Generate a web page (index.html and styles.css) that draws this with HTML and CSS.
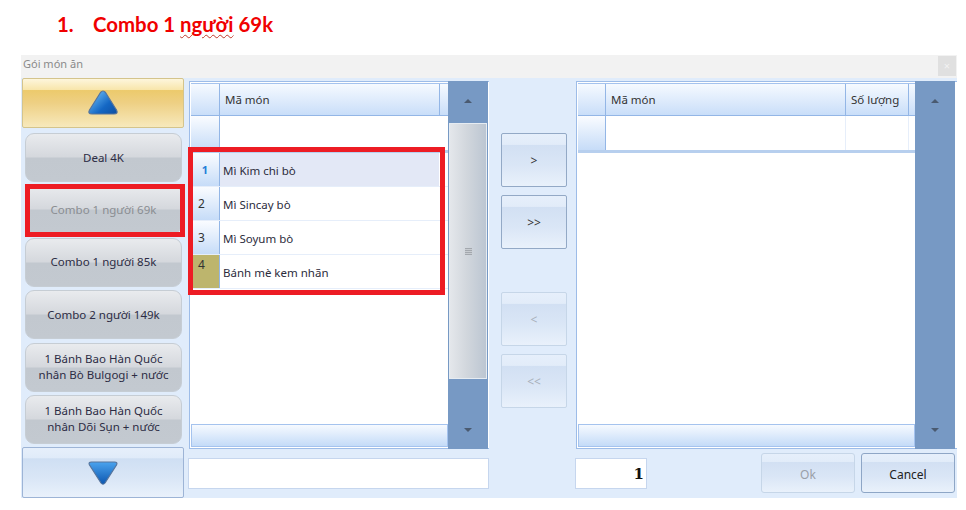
FILE: index.html
```html
<!DOCTYPE html>
<html lang="vi">
<head>
<meta charset="utf-8">
<title>Gói món ăn</title>
<link rel="stylesheet" href="styles.css">
</head>
<body>
<h1 class="heading"><span class="heading-num">1.</span><span>Combo 1 <span class="squiggle">người</span> 69k</span></h1>
<div class="dialog">
  <div class="titlebar"><span>Gói món ăn</span><span class="close">×</span></div>
  <div class="body">
    <div class="sidebar">
      <button class="nav nav-up"><svg width="32" height="28" viewBox="0 0 32 28"><defs><linearGradient id="tu" x1="0.1" y1="0.2" x2="1" y2="1"><stop offset="0" stop-color="#63b4f0"/><stop offset="0.55" stop-color="#1467c4"/><stop offset="1" stop-color="#0f4fa0"/></linearGradient></defs><path d="M13.5 3.5 Q16 0.5 18.5 3.5 L29.5 21 Q31.5 25 27 25 L5 25 Q0.5 25 2.5 21 Z" fill="url(#tu)" stroke="#56749c" stroke-width="1.2" stroke-linejoin="round"/></svg></button>
      <div class="items">
        <button class="item">Deal 4K</button>
        <button class="item item-off">Combo 1 người 69k</button>
        <button class="item">Combo 1 người 85k</button>
        <button class="item">Combo 2 người 149k</button>
        <button class="item">1 Bánh Bao Hàn Quốc<br>nhân Bò Bulgogi + nước</button>
        <button class="item">1 Bánh Bao Hàn Quốc<br>nhân Dõi Sụn + nước</button>
      </div>
      <button class="nav nav-down"><svg width="32" height="26" viewBox="0 0 32 26"><defs><linearGradient id="td" x1="0" y1="0" x2="0" y2="1"><stop offset="0" stop-color="#4aa3ee"/><stop offset="1" stop-color="#0d57b0"/></linearGradient></defs><path d="M18 23 Q16 25.5 14 23 L2.5 5 Q1 2 4.5 2 L27.5 2 Q31 2 29.5 5 Z" fill="url(#td)" stroke="#56749c" stroke-width="1.2" stroke-linejoin="round"/></svg></button>
    </div>

    <div class="panel panel-left">
      <div class="gridbox">
        <div class="grid">
          <div class="row head">
            <div class="ind"></div><div class="cell cell-main">Mã món</div><div class="cell-end"></div>
          </div>
          <div class="row blank"><div class="ind"></div><div class="cell cell-fill"></div></div>
          <div class="row data selected"><div class="ind ind-active">1</div><div class="cell">Mì Kim chi bò</div></div>
          <div class="row data"><div class="ind">2</div><div class="cell">Mì Sincay bò</div></div>
          <div class="row data"><div class="ind">3</div><div class="cell">Mì Soyum bò</div></div>
          <div class="row data"><div class="ind ind-new">4</div><div class="cell">Bánh mè kem nhãn</div></div>
          <div class="grid-fill"></div>
          <div class="hscroll"></div>
        </div>
        <div class="vscroll">
          <div class="vbtn"><span class="arrow-up"></span></div>
          <div class="thumb"><span class="grip"></span></div>
          <div class="vrest"></div>
          <div class="vbtn vbtn-down"><span class="arrow-down"></span></div>
        </div>
      </div>
      <div class="field field-search"></div>
    </div>

    <div class="movers">
      <button class="mv">&gt;</button>
      <button class="mv">&gt;&gt;</button>
      <button class="mv mv-off mv-gap">&lt;</button>
      <button class="mv mv-off">&lt;&lt;</button>
    </div>

    <div class="panel panel-right">
      <div class="gridbox">
        <div class="grid">
          <div class="row head">
            <div class="ind ind-narrow"></div><div class="cell cell-name">Mã món</div><div class="cell cell-qty">Số lượng</div><div class="cell-end"></div>
          </div>
          <div class="row blank"><div class="ind ind-narrow"></div><div class="cell cell-name"></div><div class="cell cell-qty"></div></div>
          <div class="grid-fill"></div>
          <div class="hscroll"></div>
        </div>
        <div class="vscroll">
          <div class="vbtn"><span class="arrow-up"></span></div>
          <div class="vrest"></div>
          <div class="vbtn vbtn-down"><span class="arrow-down"></span></div>
        </div>
      </div>
      <div class="footer">
        <div class="field field-qty">1</div>
        <div class="actions">
          <button class="act act-off">Ok</button>
          <button class="act">Cancel</button>
        </div>
      </div>
    </div>
  </div>
  <div class="mark mark-item"></div>
  <div class="mark mark-rows"></div>
</div>
</body>
</html>
```
FILE: styles.css
```css
* { box-sizing: border-box; }
html, body { margin: 0; padding: 0; background: #fff; }
body { width: 966px; height: 510px; overflow: hidden; font-family: "Noto Sans", "Open Sans", sans-serif; }
button { font: inherit; padding: 0; margin: 0; }

.heading { margin: 0; height: 55px; padding: 11px 0 0 57px; display: flex; font: bold 20.4px/26px Lato, "Open Sans", sans-serif; color: #f00000; }
.heading-num { width: 36px; }
.squiggle { text-decoration: underline wavy #c0392b 1px; text-underline-offset: 2px; }

.dialog { position: relative; margin-left: 21px; width: 936px; height: 443px; background: #e0ecfb; font-size: 11.5px; color: #2c2c3c; }
.titlebar { height: 23px; background: #f2f2f2; display: flex; align-items: flex-start; justify-content: space-between; padding: 1px 0 0 2px; color: #8a8a8a; font-size: 11px; }
.close { width: 18px; height: 20px; background: #e0e0e0; color: #f2f2f2; text-align: center; line-height: 20px; margin-right: 1px; }
.body { display: flex; height: 420px; }

.sidebar { width: 163px; margin-left: 1px; display: flex; flex-direction: column; }
.nav { display: flex; align-items: center; justify-content: center; border-radius: 2px; width: 162px; }
.nav-up { height: 50px; border: 1px solid #d4c48c; background: linear-gradient(#fdf6dc 0, #f8e6ac 22%, #ecca6c 24%, #eed084 50%, #f7e9bc 100%); }
.nav-down { height: 51px; border: 1px solid #9db4d6; background: linear-gradient(#e6effb 0, #e0ebf9 20%, #cfdff3 22%, #d9e6f6 60%, #e9f1fb 100%); }
.items { flex: 1; display: flex; flex-direction: column; gap: 3.4px; padding: 5px 0 0 3px; }
.item { width: 157px; height: 49px; border: 1.5px solid #c6cdd4; border-radius: 9px; background: linear-gradient(#e9ebee 0, #d5d8dd 48%, #c2c8cf 52%, #c3c9d0 100%); color: #2c2c44; font-size: 11.5px; line-height: 16px; }
.item-off { color: #8a8d92; }

.panel { display: flex; flex-direction: column; }
.panel-left { width: 300px; margin-left: 4px; padding-top: 3px; }
.panel-right { width: 381px; padding-top: 3px; }
.gridbox { height: 368px; display: flex; border: 1px solid #9dbce8; border-right: 0; background: #fff; }
.grid { flex: 1; min-width: 0; display: flex; flex-direction: column; }
.row { display: flex; }
.ind { width: 29px; flex: none; border-right: 1px solid #93b6e6; background: linear-gradient(#fafcff, #c6dcf8); display: flex; align-items: center; padding-left: 7px; font-size: 12px; color: #333; }
.ind-narrow { width: 28px; }
.head { height: 33px; margin: 1px 0 0 1px; border-top: 1px solid #a5c3ee; border-bottom: 1px solid #93b6e6; background: linear-gradient(#f6faff, #c9def9); }
.head .ind { background: none; }
.cell { display: flex; align-items: center; padding-left: 3px; }
.head .cell { padding-left: 5px; color: #333; }
.cell-main { width: 220px; border-right: 1px solid #93b6e6; }
.cell-fill { flex: 1; }
.cell-name { width: 240px; flex: none; border-right: 1px solid #93b6e6; }
.cell-qty { width: 63px; flex: none; border-right: 1px solid #93b6e6; }
.blank .cell-name, .blank .cell-qty { border-right-color: #e6eefa; }
.cell-end { flex: 1; }
.blank { height: 37px; margin-left: 1px; border-bottom: 3px solid #b7cfee; }
.data { height: 34px; margin-left: 1px; border-bottom: 1px solid #e6eefa; }
.data .cell { flex: 1; margin-right: 9px; padding-top: 2px; }
.selected .cell { background: #e3e8f6; margin-right: 9px; }
.ind-active { color: #1f7fd8; font-weight: bold; font-size: 11px; justify-content: center; padding: 0; }
.ind-new { background: #bdb56d; align-items: flex-start; padding-top: 1px; color: #333; }
.grid-fill { flex: 1; }
.hscroll { height: 23px; margin: 0 0 1px 1px; border: 1px solid #a5c3ee; background: linear-gradient(#f6faff, #c4dbf8); }

.vscroll { width: 40px; flex: none; background: #7799c4; display: flex; flex-direction: column; margin-right: 1px; }
.panel-right .vscroll { margin-right: 2px; }
.gridbox .vscroll { margin-top: -1px; margin-bottom: -1px; }
.vbtn { height: 42px; display: flex; align-items: center; justify-content: center; flex: none; }
.vbtn-down { height: 38px; }
.vrest { flex: 1; }
.arrow-up { width: 0; height: 0; border: 4px solid transparent; border-top: 0; border-bottom: 4px solid #4a5a70; margin-top: -3px; }
.arrow-down { width: 0; height: 0; border: 4px solid transparent; border-bottom: 0; border-top: 4px solid #4a5a70; }
.thumb { height: 256px; flex: none; margin: 0 1px; border: 1px solid #e6ecf2; background: linear-gradient(90deg, #e4e7eb 0, #d2d7dd 45%, #bcc6d2 100%); display: flex; align-items: center; justify-content: center; }
.grip { width: 7px; height: 7px; background: repeating-linear-gradient(#a3a8ae 0 1px, #c8ccd1 1px 2px); }

.field { background: #fff; border: 1px solid #c6d6ee; }
.field-search { width: 301px; height: 31px; margin: 9px 0 0 -1px; }

.movers { width: 87px; display: flex; flex-direction: column; padding: 55px 0 0 12px; gap: 8px; }
.mv { width: 66px; height: 54px; border: 1px solid #93a9c6; border-radius: 2px; background: linear-gradient(#e6effb 0, #e2ecf9 20%, #d2e0f3 22%, #dae6f6 60%, #e9f1fb 100%); font-size: 12px; color: #333; }
.mv-off { border-color: #c6d6e8; color: #a8b0ba; }
.mv-gap { margin-top: 35px; }

.footer { display: flex; justify-content: space-between; align-items: center; margin-top: 4px; height: 40px; padding-right: 2px; }
.field-qty { width: 72px; height: 31px; margin-left: -1px; text-align: right; padding: 5px 2px 0 0; font: bold 15px/20px "DejaVu Serif", serif; color: #111; }
.actions { display: flex; gap: 6px; }
.act { width: 94px; height: 40px; padding-top: 2px; border: 1px solid #8ea6c6; border-radius: 3px; background: linear-gradient(#e6effb 0, #e2ecf9 20%, #d2e0f3 22%, #dae6f6 60%, #e9f1fb 100%); font-size: 12px; color: #222; }
.act-off { border-color: #c6d6e8; color: #9aa0a8; }

.mark { position: absolute; border: 5px solid #ed1c24; pointer-events: none; }
.mark-item { left: 4px; top: 129px; width: 160px; height: 53px; }
.mark-rows { left: 167px; top: 92px; width: 257px; height: 148px; }
```
